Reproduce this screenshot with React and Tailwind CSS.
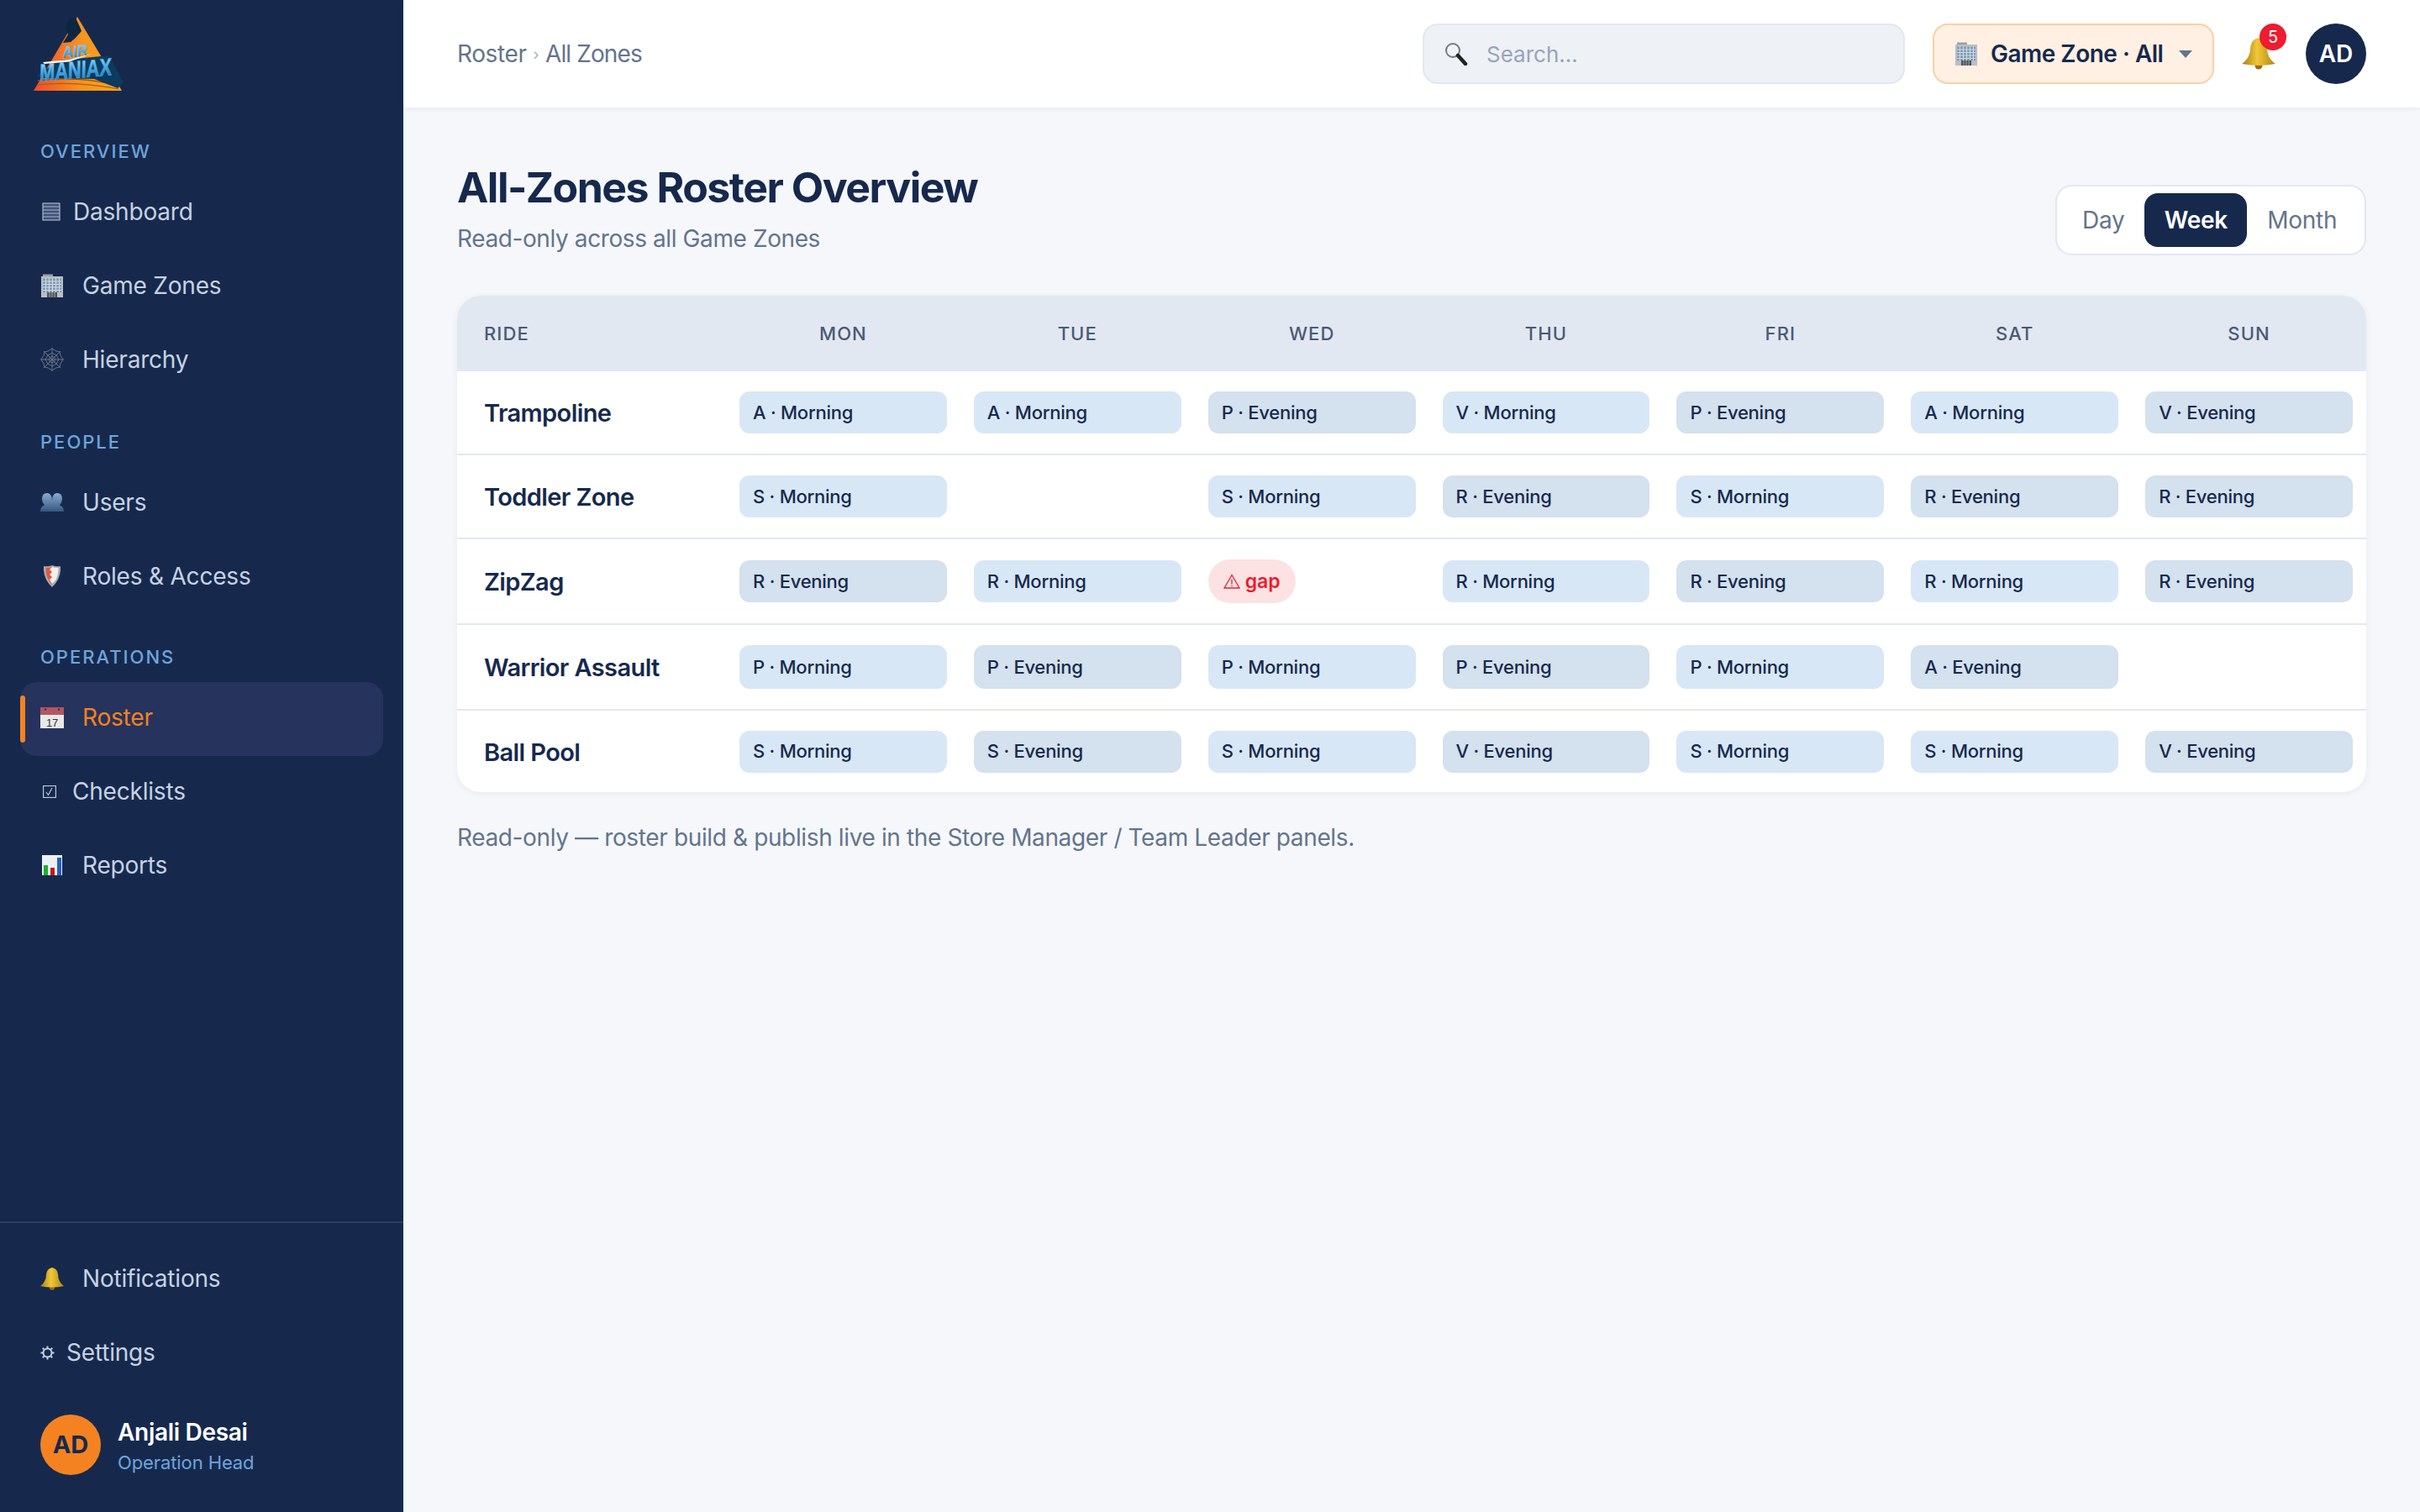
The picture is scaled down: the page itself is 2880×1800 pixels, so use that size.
const NAVY = "#16294d";

function LogoMark() {
  return (
    <svg width="107" height="88" viewBox="0 0 107 88" className="overflow-visible">
      <defs>
        <linearGradient id="tri" x1="0" y1="0" x2="1" y2="0">
          <stop offset="0" stopColor="#ef4b2c" />
          <stop offset="0.55" stopColor="#f7941d" />
          <stop offset="1" stopColor="#fba61e" />
        </linearGradient>
        <linearGradient id="blue" x1="0" y1="0" x2="0" y2="1">
          <stop offset="0" stopColor="#b4e3f7" />
          <stop offset="0.55" stopColor="#45a4de" />
          <stop offset="1" stopColor="#1a6ea8" />
        </linearGradient>
      </defs>
      <path d="M52 0 L105 88 L0 88 Z" fill="url(#tri)" />
      <path d="M42 2 L50 1 L55 12 L57 17 L50 25 L44 30 L35 31 L41 21 L38 14 Z" fill="#0e2740" />
      <path d="M5 76 Q50 70 98 81" stroke="#8a5212" strokeWidth="1.4" fill="none" />
      <path d="M4 81 Q50 76 101 86" stroke="#a8630f" strokeWidth="1.2" fill="none" />
      <path d="M4 70 L30 52 L90 46 L107 79 L100 85 L72 74 L8 73 Z" fill="#0d3a5e" />
      <g transform="rotate(-5 50 55) skewX(-6)">
        <text x="40" y="48" fontFamily="Liberation Sans" fontWeight="700" fontSize="20" textLength="30" lengthAdjust="spacingAndGlyphs" fill="url(#blue)" stroke="#6dbbe8" strokeWidth="0.5">AIR</text>
        <text x="13" y="73" fontFamily="Liberation Sans" fontWeight="700" fontSize="29" textLength="86" lengthAdjust="spacingAndGlyphs" fill="url(#blue)" stroke="#3f9fdb" strokeWidth="0.8">MANIAX</text>
      </g>
      <path d="M11 54 L42 51 L70 44 L42 53.5 L13 56 Z" fill="#ffffff" />
    </svg>
  );
}

function DashIcon() {
  return (
    <svg width="22" height="22" viewBox="0 0 22 22" className="ml-[2px]">
      <rect x="1" y="1" width="20" height="20" fill="#3f5377" stroke="#aab6cb" strokeWidth="1.2" />
      <path d="M1 5h20M1 9h20M1 13h20M1 17h20" stroke="#aab6cb" strokeWidth="1.2" />
    </svg>
  );
}

function BuildingIcon({ size = 28 }) {
  return (
    <svg width={size} height={size} viewBox="0 0 28 28">
      <rect x="3" y="0.5" width="12" height="4" fill="#9a9fa5" />
      <rect x="1" y="3" width="26" height="25" fill="#b9bfc4" />
      <rect x="3" y="5.5" width="22" height="16.5" fill="#7e9bb6" />
      <path d="M3 9h22M3 12.5h22M3 16h22M3 19.5h22" stroke="#d3dbe2" strokeWidth="1.2" />
      <path d="M6.5 5v17M10.5 5v17M14.5 5v17M18.5 5v17M22.5 5v17" stroke="#d3dbe2" strokeWidth="1" />
      <rect x="8" y="22" width="12" height="6" fill="#4f5357" />
      <path d="M11 22v6M14 22v6M17 22v6" stroke="#a3a6a9" strokeWidth="1" />
    </svg>
  );
}

function WebIcon() {
  return (
    <svg width="28" height="28" viewBox="0 0 28 28" fill="none" stroke="#68738a" strokeWidth="1">
      <path d="M14 0v28M0 14h28M4 4l20 20M24 4L4 24" />
      <path d="M14 1 Q19 5 23 5 Q23 9 27 14 Q23 19 23 23 Q19 23 14 27 Q9 23 5 23 Q5 19 1 14 Q5 9 5 5 Q9 5 14 1Z" />
      <path d="M14 6 Q17 8.5 19.5 8.5 Q19.5 11 22 14 Q19.5 17 19.5 19.5 Q17 19.5 14 22 Q11 19.5 8.5 19.5 Q8.5 17 6 14 Q8.5 11 8.5 8.5 Q11 8.5 14 6Z" />
      <path d="M14 10 Q15.5 11.5 17 11 Q16.5 12.5 18 14 Q16.5 15.5 17 17 Q15.5 16.5 14 18 Q12.5 16.5 11 17 Q11.5 15.5 10 14 Q11.5 12.5 11 11 Q12.5 11.5 14 10Z" />
    </svg>
  );
}

function UsersIcon() {
  return (
    <svg width="28" height="22" viewBox="0 0 28 22">
      <defs>
        <linearGradient id="usr" x1="0" y1="0" x2="0" y2="1">
          <stop offset="0" stopColor="#8aabcf" />
          <stop offset="1" stopColor="#35577f" />
        </linearGradient>
      </defs>
      <path d="M0 22 Q0 16 5 14.5 Q2 11 2 7 Q2 0 8 0 Q12 0 13.6 5 L14 9 L14.4 5 Q16 0 20 0 Q26 0 26 7 Q26 11 23 14.5 Q28 16 28 22 Z" fill="url(#usr)" />
    </svg>
  );
}

function ShieldIcon() {
  return (
    <svg width="20" height="26" viewBox="0 0 20 26">
      <path d="M10 0 Q15 2 20 1 Q21 16 10 26 Q-1 16 0 1 Q5 2 10 0Z" fill="#a9adb2" />
      <path d="M2.5 3 Q6 3 10 2 L10 23 Q2 15 2.5 3Z" fill="#e2573f" />
      <path d="M10 2 L7 5 L10 8 L7 11 L10 14 L7 17 L10 22 L14 18 Q17.5 12 17.5 3 Q13 3 10 2Z" fill="#f3f0ec" />
    </svg>
  );
}

function CalendarIcon() {
  return (
    <svg width="28" height="25" viewBox="0 0 28 25">
      <rect x="0" y="0" width="28" height="9" fill="#b55561" />
      <rect x="0" y="9" width="28" height="16" fill="#e9e9e9" />
      <circle cx="6" cy="2.5" r="1.3" fill="#2b3a58" />
      <circle cx="22" cy="2.5" r="1.3" fill="#2b3a58" />
      <text x="14" y="22.5" textAnchor="middle" fontFamily="Liberation Sans" fontSize="13" fill="#333">17</text>
    </svg>
  );
}

function ChartIcon() {
  return (
    <svg width="24" height="24" viewBox="0 0 24 24">
      <rect width="24" height="24" fill="#eef1f4" />
      <rect x="2" y="12" width="5" height="12" fill="#16b02c" />
      <rect x="10" y="15" width="5" height="9" fill="#c9171c" />
      <rect x="18" y="3" width="5" height="21" fill="#1f62c9" />
    </svg>
  );
}

function CheckIcon() {
  return (
    <svg width="16" height="15" viewBox="0 0 16 15" fill="none" className="ml-[3px]">
      <rect x="0.6" y="0.6" width="14.8" height="13.8" stroke="#c6d0e0" strokeWidth="1.1" />
      <path d="M4 8l2.5 3.5L11 3" stroke="#c6d0e0" strokeWidth="1.1" />
    </svg>
  );
}

function BellIcon({ w = 28, h = 27 }) {
  return (
    <svg width={w} height={h} viewBox="0 0 28 27">
      <defs>
        <linearGradient id="gold" x1="0" y1="0" x2="1" y2="0">
          <stop offset="0" stopColor="#a97d10" />
          <stop offset="0.45" stopColor="#f0c737" />
          <stop offset="1" stopColor="#b3860f" />
        </linearGradient>
      </defs>
      <circle cx="14" cy="23.5" r="3.2" fill="#9a6e12" />
      <path d="M14 0 Q20 1 21 8 Q21 17 28 22 Q14 25 0 22 Q7 17 7 8 Q8 1 14 0Z" fill="url(#gold)" />
    </svg>
  );
}

function GearIcon() {
  return (
    <svg width="17" height="17" viewBox="0 0 17 17" fill="none" stroke="#c6d0e0">
      <circle cx="8.5" cy="8.5" r="5" strokeWidth="2" />
      <path d="M8.5 0.5v2.5M8.5 14v2.5M0.5 8.5H3M14 8.5h2.5M2.8 2.8l1.8 1.8M12.4 12.4l1.8 1.8M14.2 2.8l-1.8 1.8M4.6 12.4l-1.8 1.8" strokeWidth="2" />
    </svg>
  );
}

function SearchIcon() {
  return (
    <svg width="28" height="28" viewBox="0 0 28 28" fill="none">
      <circle cx="10" cy="10" r="8" fill="#eef4f7" stroke="#77797c" strokeWidth="2" />
      <path d="M16 16l9 10" stroke="#222" strokeWidth="4.5" strokeLinecap="round" />
    </svg>
  );
}

function WarnIcon() {
  return (
    <svg width="20" height="18" viewBox="0 0 20 18" fill="none" stroke="#ee1c2e" strokeWidth="1.3">
      <path d="M10 1.5L19 17H1Z" />
      <path d="M10 6.5v6M10 13.8v1.4" />
    </svg>
  );
}

const navGroups = [
  {
    title: "Overview",
    wrap: "h-[32px] mt-0 mb-3",
    items: [
      { label: "Dashboard", icon: <DashIcon />, w: "w-[39px]" },
      { label: "Game Zones", icon: <BuildingIcon />, w: "w-[50px]" },
      { label: "Hierarchy", icon: <WebIcon />, w: "w-[50px]" },
    ],
  },
  {
    title: "People",
    wrap: "h-[32px] mt-[38px] mb-3",
    items: [
      { label: "Users", icon: <UsersIcon />, w: "w-[50px]" },
      { label: "Roles & Access", icon: <span className="ml-1 flex"><ShieldIcon /></span>, w: "w-[50px]" },
    ],
  },
  {
    title: "Operations",
    wrap: "h-[32px] mt-[36px] mb-[14px]",
    items: [
      { label: "Roster", icon: <CalendarIcon />, w: "w-[50px]", active: true, lift: true },
      { label: "Checklists", icon: <CheckIcon />, w: "w-[38px]", lift: true },
      { label: "Reports", icon: <span className="ml-[2px] flex"><ChartIcon /></span>, w: "w-[50px]", lift: true },
    ],
  },
];

function NavItem({ item }) {
  return (
    <div
      className={`relative mx-6 flex h-[88px] items-center rounded-[20px] px-6 text-[28px] tracking-[-0.2px] ${
        item.lift ? "pb-1" : ""
      } ${item.active ? "bg-[#25335d] text-[#f58220]" : "text-[#c6d2e3]"}`}
    >
      {item.active && <span className="absolute left-0 top-4 h-14 w-[6px] rounded-full bg-[#f58220]" />}
      <span className={`flex shrink-0 items-center ${item.w}`}>{item.icon}</span>
      <span>{item.label}</span>
    </div>
  );
}

function Sidebar() {
  return (
    <aside className="flex h-[1800px] w-[480px] shrink-0 flex-col bg-[#16294d]">
      <div className="h-[164px] pl-10 pt-5">
        <LogoMark />
      </div>
      {navGroups.map((group) => (
        <div key={group.title}>
          <div className={`flex items-center pl-12 text-[22px] font-medium uppercase tracking-[2px] text-[#6ea5dc] ${group.wrap}`}>
            {group.title}
          </div>
          {group.items.map((item) => (
            <NavItem key={item.label} item={item} />
          ))}
        </div>
      ))}
      <div className="mt-auto border-t-2 border-[#2c3d5e] pt-[22px]">
        <NavItem item={{ label: "Notifications", icon: <BellIcon />, w: "w-[50px]" }} />
        <NavItem item={{ label: "Settings", icon: <GearIcon />, w: "w-[31px]" }} />
        <div className="mt-[30px] mb-11 flex h-[72px] items-start gap-[20px] pl-12">
          <div className="flex h-[72px] w-[72px] items-center justify-center rounded-full bg-[#f58220] text-[29px] font-bold text-[#16294d]">
            AD
          </div>
          <div className="h-[72px] pt-[2px]">
            <div className="text-[28px] font-semibold leading-[38px] tracking-[-0.3px] text-white">Anjali Desai</div>
            <div className="text-[22px] leading-[34px] tracking-[-0.1px] text-[#6ea5dc]">Operation Head</div>
          </div>
        </div>
      </div>
    </aside>
  );
}

function TopBar() {
  return (
    <header className="flex h-[128px] shrink-0 items-center bg-white px-16 shadow-[0_2px_6px_rgba(22,41,77,0.06)]">
      <div className="flex items-center text-[28px] tracking-[-0.4px] text-[#64748b]">
        <span>Roster</span>
        <span className="mx-[8px] text-[18px] text-[#a3afc2]">›</span>
        <span className="tracking-[-0.9px]">All Zones</span>
      </div>
      <div className="ml-auto flex items-center">
        <div className="flex h-[72px] w-[574px] items-center gap-[22px] rounded-[18px] border-2 border-[#e2e8f0] bg-[#eef1f6] pl-6">
          <SearchIcon />
          <span className="text-[26px] text-[#98a5b9]">Search...</span>
        </div>
        <div className="ml-[33px] flex h-[72px] w-[335px] items-center rounded-[18px] border-2 border-[#fbd0a6] bg-[#fff0e3] pl-6">
          <BuildingIcon />
          <span className="ml-[15px] text-[28px] font-semibold tracking-[-0.5px] text-[#16294d]">Game Zone · All</span>
          <span className="ml-auto mr-[24px] h-0 w-0 border-x-[8px] border-t-[9px] border-x-transparent border-t-[#64748b]" />
        </div>
        <div className="relative ml-[33px] flex h-[72px] w-[76px] items-center">
          <BellIcon w={40} h={38} />
          <span className="absolute left-[21px] top-0 flex h-8 w-8 items-center justify-center rounded-full bg-[#ee1c2e] text-[20px] text-white">
            5
          </span>
        </div>
        <div className="flex h-[72px] w-[72px] items-center justify-center rounded-full bg-[#16294d] text-[28px] font-semibold text-white">
          AD
        </div>
      </div>
    </header>
  );
}

const days = ["MON", "TUE", "WED", "THU", "FRI", "SAT", "SUN"];

const rows = [
  { name: "Trampoline", h: "h-[100px]", chip: "h-[50px]", cells: ["A·M", "A·M", "P·E", "V·M", "P·E", "A·M", "V·E"] },
  { name: "Toddler Zone", h: "h-[100px]", chip: "h-[50px]", cells: ["S·M", "", "S·M", "R·E", "S·M", "R·E", "R·E"] },
  { name: "ZipZag", h: "h-[102px]", chip: "h-[50px]", cells: ["R·E", "R·M", "gap", "R·M", "R·E", "R·M", "R·E"] },
  { name: "Warrior Assault", h: "h-[102px]", chip: "h-[52px]", cells: ["P·M", "P·E", "P·M", "P·E", "P·M", "A·E", ""] },
  { name: "Ball Pool", h: "h-[97px]", chip: "h-[50px]", cells: ["S·M", "S·E", "S·M", "V·E", "S·M", "S·M", "V·E"] },
];

function Cell({ value, chip }) {
  if (!value) return <div />;
  if (value === "gap") {
    return (
      <div className="px-4">
        <span className="flex h-[52px] w-[104px] items-center justify-center gap-[6px] rounded-full bg-[#fde2e3] text-[23px] font-semibold text-[#ee1c2e]">
          <WarnIcon />
          gap
        </span>
      </div>
    );
  }
  const [who, shift] = value.split("·");
  const morning = shift === "M";
  return (
    <div className="px-4">
      <div
        className={`flex items-center rounded-[12px] pl-4 text-[22px] font-medium tracking-[-0.25px] text-[#16294d] ${chip} ${
          morning ? "bg-[#d8e7f6]" : "bg-[#d4e1ee]"
        }`}
      >
        {who} · {morning ? "Morning" : "Evening"}
      </div>
    </div>
  );
}

function RosterTable() {
  return (
    <div className="overflow-hidden rounded-[28px] bg-white shadow-[0_2px_8px_rgba(22,41,77,0.06)]">
      <div className="grid h-[90px] grid-cols-[320px_repeat(7,minmax(0,1fr))] items-center bg-[#e2e8f2] text-[22px] font-medium tracking-[1.1px] text-[#4a5a75]">
        <div className="pl-8">RIDE</div>
        {days.map((d) => (
          <div key={d} className="text-center">{d}</div>
        ))}
      </div>
      {rows.map((row, i) => (
        <div
          key={row.name}
          className={`grid grid-cols-[320px_repeat(7,minmax(0,1fr))] items-center ${row.h} ${
            i < rows.length - 1 ? "border-b-2 border-[#e2e8f2]" : ""
          }`}
        >
          <div className="pl-8 pt-[2px] text-[29px] font-semibold tracking-[-0.6px] text-[#16294d]">{row.name}</div>
          {row.cells.map((c, j) => (
            <Cell key={j} value={c} chip={row.chip} />
          ))}
        </div>
      ))}
    </div>
  );
}

function ViewToggle() {
  return (
    <div className="flex h-[84px] w-[370px] items-center rounded-[20px] border-2 border-[#e2e8f0] bg-white pl-[30px] text-[28px] tracking-[-0.3px] text-[#64748b]">
      <span>Day</span>
      <span className="ml-6 flex h-16 w-[122px] items-center justify-center rounded-[16px] bg-[#16294d] font-semibold text-white">
        Week
      </span>
      <span className="ml-6">Month</span>
    </div>
  );
}

export default function App() {
  return (
    <div className="flex h-[1800px] w-[2880px] overflow-hidden bg-[#f5f7fb] font-['Inter',sans-serif]" style={{ color: NAVY }}>
      <Sidebar />
      <main className="flex min-w-0 flex-1 flex-col">
        <TopBar />
        <div className="px-16 pt-16">
          <div className="mb-12 flex items-end justify-between">
            <div>
              <h1 className="text-[50px] font-bold leading-[62px] tracking-[-1.5px] text-[#16294d]">All-Zones Roster Overview</h1>
              <p className="mt-[10px] text-[28px] leading-[40px] tracking-[-0.4px] text-[#64748b]">Read-only across all Game Zones</p>
            </div>
            <ViewToggle />
          </div>
          <RosterTable />
          <p className="mt-[34px] text-[28px] leading-[40px] tracking-[-0.37px] text-[#64748b]">
            Read-only — roster build & publish live in the Store Manager / Team Leader panels.
          </p>
        </div>
      </main>
    </div>
  );
}
